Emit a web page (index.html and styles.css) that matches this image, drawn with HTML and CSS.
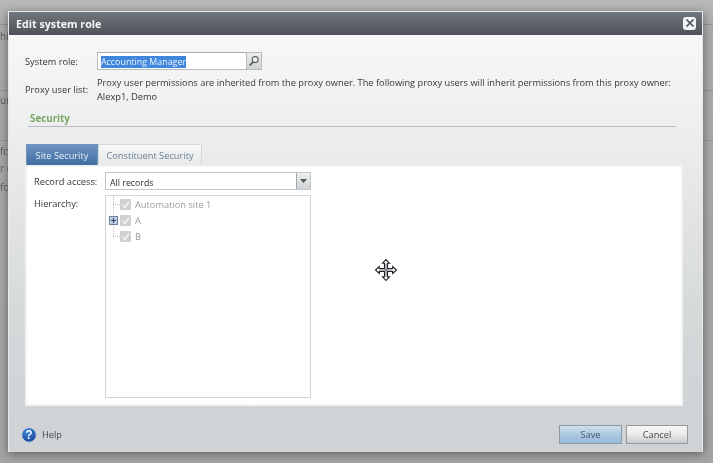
FILE: index.html
```html
<!DOCTYPE html>
<html lang="en">
<head>
<meta charset="utf-8">
<title>Edit system role</title>
<link rel="stylesheet" href="styles.css">
</head>
<body>
<div class="backdrop">
  <div class="under-line under-a"></div>
  <div class="under-line under-b"></div>
  <div class="under-line under-c"></div>
  <div class="under-text under-1">hij</div>
  <div class="under-text under-2">un</div>
  <div class="under-text under-3">fc</div>
  <div class="under-text under-4">r c</div>
  <div class="under-text under-5">for</div>
</div>
<div class="dialog">
  <header class="titlebar">
    <h1 class="title">Edit system role</h1>
    <button class="close" aria-label="Close">
      <svg width="10" height="10" viewBox="0 0 10 10"><path d="M1.5 1.500l7 7M8.500 1.500l-7 7" stroke="#4c5157" stroke-width="1.700" fill="none"/></svg>
    </button>
  </header>
  <div class="content">
    <div class="field-role">
      <span class="label label-role">System role:</span>
      <div class="lookup">
        <div class="lookup-input"><span class="selected">Accounting Manager</span></div>
        <div class="lookup-btn">
          <svg width="12" height="12" viewBox="0 0 12 12"><circle cx="7.200" cy="4.600" r="3" fill="#f4f5f5" stroke="#5a5f62" stroke-width="1.100"/><path d="M5 7L1.800 10.400" stroke="#4a4f52" stroke-width="1.600"/></svg>
        </div>
      </div>
    </div>
    <div class="field-proxy">
      <span class="label label-proxy">Proxy user list:</span>
      <p class="proxy-text">Proxy user permissions are inherited from the proxy owner. The following proxy users will inherit permissions from this proxy owner:<br>Alexp1, Demo</p>
    </div>
    <h2 class="section">Security</h2>
    <div class="tabs">
      <div class="tab tab-active">Site Security</div>
      <div class="tab tab-second">Constituent Security</div>
    </div>
    <div class="panel">
      <div class="panel-form">
        <div class="row-record">
          <span class="label label-form">Record access:</span>
          <div class="select">
            <span class="select-value">All records</span>
            <span class="select-btn"><svg width="9" height="6" viewBox="0 0 9 6"><path d="M1 1h7L4.500 5z" fill="#55595c"/></svg></span>
          </div>
        </div>
        <div class="row-hierarchy">
          <span class="label label-form label-hierarchy">Hierarchy:</span>
          <div class="tree">
            <span class="tree-spine"></span>
            <div class="node">
              <span class="connector"></span>
              <span class="check"><svg width="11" height="11" viewBox="0 0 10 10"><path d="M2 5.200l2.200 2.300L8.200 2.600" stroke="#f3f3f3" stroke-width="1.600" fill="none"/></svg></span>
              <span class="node-label">Automation site 1</span>
            </div>
            <div class="node">
              <span class="expander"><svg width="7" height="7" viewBox="0 0 7 7"><path d="M3.500 1v5M1 3.500h5" stroke="#2f4f78" stroke-width="1.200"/></svg></span>
              <span class="check"><svg width="11" height="11" viewBox="0 0 10 10"><path d="M2 5.200l2.200 2.300L8.200 2.600" stroke="#f3f3f3" stroke-width="1.600" fill="none"/></svg></span>
              <span class="node-label">A</span>
            </div>
            <div class="node">
              <span class="connector"></span>
              <span class="check"><svg width="11" height="11" viewBox="0 0 10 10"><path d="M2 5.200l2.200 2.300L8.200 2.600" stroke="#f3f3f3" stroke-width="1.600" fill="none"/></svg></span>
              <span class="node-label">B</span>
            </div>
          </div>
        </div>
      </div>
    </div>
  </div>
  <footer class="footer">
    <div class="help">
      <svg class="help-icon" width="16" height="16" viewBox="0 0 16 16">
        <defs><radialGradient id="hg" cx="0.4" cy="0.3" r="0.8"><stop offset="0" stop-color="#3f86d8"/><stop offset="1" stop-color="#123f94"/></radialGradient></defs>
        <circle cx="8" cy="8" r="7.300" fill="url(#hg)" stroke="#c9d4e2" stroke-width="1"/>
        <text x="8" y="12.200" text-anchor="middle" class="help-q">?</text>
      </svg>
      <span>Help</span>
    </div>
    <div class="actions">
      <button class="btn btn-primary">Save</button>
      <button class="btn">Cancel</button>
    </div>
  </footer>
  <svg class="move-cursor" width="24" height="24" viewBox="0 0 24 24">
    <path d="M12 1.500l3.500 3.800h-2v5.200h5.200v-2l3.800 3.500-3.800 3.500v-2h-5.200v5.200h2L12 22.500l-3.500-3.800h2v-5.200H5.300v2L1.500 12l3.800-3.500v2h5.200V5.300h-2z" fill="#fff" stroke="#23252b" stroke-width="1.100"/>
    <path d="M12 5.500v13M5.500 12h13" stroke="#23252b" stroke-width="0.700" fill="none"/>
  </svg>
</div>
</body>
</html>
```
FILE: styles.css
```css
* { box-sizing: border-box; }
html, body {
  margin: 0;
  width: 713px;
  height: 463px;
  overflow: hidden;
}
body {
  position: relative;
  background: #a9a9a9;
  font-family: "Open Sans", "Noto Sans", sans-serif;
  font-size: 9.27px;
  color: #3b3f42;
  filter: blur(0.4px);
}
.backdrop {
  position: absolute;
  inset: 0;
  background: linear-gradient(#b9b9b9 0, #aaa 30px, #a5a5a5 100%);
}
.under-line { position: absolute; left: 0; right: 0; height: 1px; background: #969696; }
.under-a { top: 24px; }
.under-b { top: 90px; }
.under-c { top: 140px; }
.under-text { position: absolute; left: 0; color: #5f5f5f; font-size: 10px; line-height: 12px; }
.under-1 { top: 30px; }
.under-2 { top: 94px; }
.under-3 { top: 145px; }
.under-4 { top: 162px; }
.under-5 { top: 181px; }

.dialog {
  position: absolute;
  left: 8px;
  top: 11px;
  width: 695px;
  height: 441px;
  display: flex;
  flex-direction: column;
  background: linear-gradient(#f7f7f7 24px, #eceded 130px, #d6d9da 300px, #cfd3d5 400px);
  border: 1px solid #e8e9ea;
  border-bottom: 0;
  box-shadow: 0 2px 9px rgba(40, 40, 40, .55);
}
.titlebar {
  flex: none;
  height: 23px;
  padding: 0 8px 0 7px;
  display: flex;
  align-items: center;
  justify-content: space-between;
  background: linear-gradient(#72777d, #4d5158);
}
.title {
  margin: 0;
  font-size: 10.7px;
  font-weight: 700;
  color: #f6f6f6;
}
.close {
  width: 13px;
  height: 13px;
  padding: 0;
  margin-top: -1px;
  margin-right: -2px;
  display: flex;
  align-items: center;
  justify-content: center;
  border: 0;
  border-radius: 3px;
  background: #f2f3f3;
}
.content {
  flex: 1;
  padding: 17px 16px 0 16px;
  display: flex;
  flex-direction: column;
  min-height: 0;
}
.label { color: #333638; white-space: nowrap; }
.field-role { display: flex; align-items: center; height: 18px; }
.label-role { width: 72px; }
.lookup { display: flex; height: 18px; }
.lookup-input {
  width: 150px;
  height: 18px;
  padding: 3px 0 0 3px;
  border: 1px solid #b8bcbe;
  border-top-color: #a6aaac;
  background: #fff;
  line-height: 12px;
}
.selected { background: #3f86dd; color: #eef4fb; display: inline-block; font-size: 8.9px; line-height: 12px; }
.lookup-btn {
  width: 15px;
  display: flex;
  align-items: center;
  justify-content: center;
  background: linear-gradient(#eceded, #cfd2d3);
  border: 1px solid #b8bcbe;
  border-left: 0;
}
.field-proxy { display: flex; margin-top: 6px; }
.label-proxy { width: 72px; margin-top: 7px; }
.proxy-text { margin: 0; line-height: 13.5px; white-space: nowrap; color: #35393c; }
.section {
  margin: 8px 0 0 3px;
  padding: 1px 0 0 2px;
  height: 16px;
  line-height: 14px;
  font-size: 9.8px;
  font-weight: 700;
  color: #7aa866;
  border-bottom: 1px solid #b9bcbe;
  width: 648px;
}
.tabs { display: flex; margin-top: 17px; height: 21px; margin-left: 1px; }
.tab {
  line-height: 21px;
  text-align: center;
  color: #6a8296;
  background: linear-gradient(#f6f7f7, #e6e8e9);
  border: 1px solid #d5d8da;
  border-bottom: 0;
}
.tab-active {
  width: 72px;
  background: linear-gradient(#6f95c0, #3f6da3);
  color: #e9eef4;
  border-color: #6f95c0;
}
.tab-second { width: 104px; }
.panel {
  width: 658px;
  height: 241px;
  background: #fff;
  border: 2px solid #f1f2f2;
  padding: 5px 0 0 7px;
}
.panel-form { display: flex; flex-direction: column; }
.row-record, .row-hierarchy { display: flex; }
.label-form { width: 71px; }
.label-hierarchy { padding-top: 2px; }
.row-record { height: 18px; align-items: center; }
.select {
  width: 206px;
  height: 18px;
  display: flex;
  justify-content: space-between;
  border: 1px solid #c3c6c8;
  background: #fff;
}
.select-value { padding: 4px 0 0 4px; font-size: 8.8px; line-height: 12px; color: #2c2f31; }
.select-btn {
  width: 14px;
  display: flex;
  align-items: center;
  justify-content: center;
  background: linear-gradient(#eef0f0, #d0d3d5);
  border-left: 1px solid #a4a8aa;
}
.row-hierarchy { margin-top: 5px; }
.tree {
  position: relative;
  width: 206px;
  height: 203px;
  border: 1px solid #d3d5d6;
  background: #fff;
}
.tree-spine {
  position: absolute;
  left: 7px;
  top: 0;
  height: 40px;
  border-left: 1px dotted #c4c4c4;
}
.node {
  position: relative;
  display: flex;
  align-items: center;
  height: 16px;
  padding-left: 14px;
  color: #9a9c9e;
}
.check {
  width: 11px;
  height: 11px;
  display: block;
  background: #cfd0d1;
  border-radius: 1px;
  margin-right: 4px;
}
.check svg { display: block; }
.connector {
  position: absolute;
  left: 7px;
  top: 8px;
  width: 7px;
  border-bottom: 1px dotted #c4c4c4;
}
.expander {
  position: absolute;
  left: 3px;
  top: 4px;
  width: 9px;
  height: 9px;
  display: flex;
  align-items: center;
  justify-content: center;
  background: #c2cfde;
  border: 1px solid #6c82a0;
}
.expander svg { display: block; }
.footer {
  flex: none;
  height: 44px;
  padding: 0 14px 8px 12px;
  display: flex;
  align-items: flex-end;
  justify-content: space-between;
}
.help { display: flex; align-items: center; gap: 5px; height: 17px; color: #44484a; margin-bottom: 1px; }
.help-icon { display: block; }
.help-q { font: 700 12px "Liberation Sans", sans-serif; fill: #f4f7fb; }
.actions { display: flex; gap: 4px; }
.btn {
  width: 62px;
  height: 19px;
  padding: 0;
  font: 9.27px "Open Sans", "Noto Sans", sans-serif;
  color: #45494c;
  background: linear-gradient(#f6f6f6, #ececec 45%, #c9cbcc);
  border: 1px solid #96999b;
}
.btn-primary {
  width: 63px;
  color: #465a6c;
  background: linear-gradient(#d0dfee, #a9c6e2 55%, #9cbcdc);
  border-color: #8d9aa6;
}
.move-cursor { position: absolute; left: 365px; top: 246px; }
```
